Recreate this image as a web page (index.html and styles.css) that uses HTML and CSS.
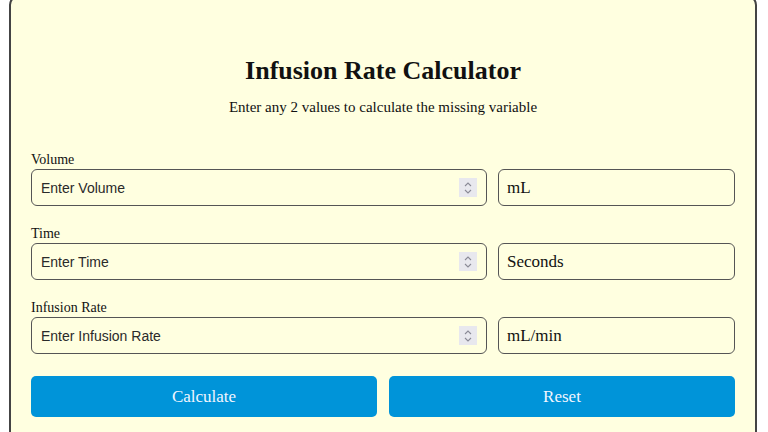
FILE: index.html
```html
<!DOCTYPE html>
<html lang="en">
<head>
<meta charset="utf-8">
<title>Infusion Rate Calculator</title>
<link rel="stylesheet" href="styles.css">
</head>
<body>
<div class="card">
  <h1 class="title">Infusion Rate Calculator</h1>
  <p class="subtitle">Enter any 2 values to calculate the missing variable</p>

  <div class="field">
    <label class="label">Volume</label>
    <div class="row">
      <div class="numbox">
        <input class="num" type="text" placeholder="Enter Volume">
        <span class="spin"><svg width="10" height="14" viewBox="0 0 10 14"><path d="M2 5 L5 2 L8 5 M2 9 L5 12 L8 9" fill="none" stroke="#8a8a96" stroke-width="1.1"/></svg></span>
      </div>
      <div class="unit">mL</div>
    </div>
  </div>

  <div class="field">
    <label class="label">Time</label>
    <div class="row">
      <div class="numbox">
        <input class="num" type="text" placeholder="Enter Time">
        <span class="spin"><svg width="10" height="14" viewBox="0 0 10 14"><path d="M2 5 L5 2 L8 5 M2 9 L5 12 L8 9" fill="none" stroke="#8a8a96" stroke-width="1.1"/></svg></span>
      </div>
      <div class="unit">Seconds</div>
    </div>
  </div>

  <div class="field">
    <label class="label">Infusion Rate</label>
    <div class="row">
      <div class="numbox">
        <input class="num" type="text" placeholder="Enter Infusion Rate">
        <span class="spin"><svg width="10" height="14" viewBox="0 0 10 14"><path d="M2 5 L5 2 L8 5 M2 9 L5 12 L8 9" fill="none" stroke="#8a8a96" stroke-width="1.1"/></svg></span>
      </div>
      <div class="unit">mL/min</div>
    </div>
  </div>

  <div class="buttons">
    <button class="btn">Calculate</button>
    <button class="btn">Reset</button>
  </div>
</div>
</body>
</html>
```

FILE: styles.css
```css
html, body {
  margin: 0;
  padding: 0;
  background: #ffffff;
  font-family: "Liberation Serif", "Times New Roman", serif;
  color: #111;
}

.card {
  width: 748px;
  box-sizing: border-box;
  margin: -5px 0 0 9px;
  padding: 59px 20px 30px 20px;
  background: #ffffe0;
  border: 2px solid #444;
  border-radius: 10px;
}

.title {
  margin: 0;
  font-size: 26px;
  line-height: 30px;
  font-weight: bold;
  text-align: center;
}

.subtitle {
  margin: 12px 0 36px 0;
  font-size: 15px;
  line-height: 18px;
  text-align: center;
}

.field {
  margin-bottom: 20px;
}

.label {
  display: block;
  font-size: 14px;
  line-height: 16px;
  margin-bottom: 1px;
}

.row {
  display: flex;
  gap: 11px;
}

.numbox {
  width: 456px;
  height: 37px;
  box-sizing: border-box;
  border: 1px solid #555;
  border-radius: 6px;
  display: flex;
  align-items: center;
  padding: 0 9px 0 9px;
}

.num {
  flex: 1;
  min-width: 0;
  border: none;
  outline: none;
  background: transparent;
  font-family: "Liberation Sans", Arial, sans-serif;
  font-size: 14px;
  padding: 0;
  color: #222;
}

.num::placeholder {
  color: #2a2a2a;
  opacity: 1;
}

.spin {
  width: 18px;
  height: 19px;
  background: #e8e8ee;
  display: flex;
  align-items: center;
  justify-content: center;
}

.unit {
  flex: 1;
  height: 37px;
  box-sizing: border-box;
  border: 1px solid #555;
  border-radius: 6px;
  display: flex;
  align-items: center;
  padding: 0 8px;
  font-size: 17px;
}

.buttons {
  display: flex;
  gap: 12px;
  margin-top: 22px;
}

.btn {
  flex: 1;
  height: 41px;
  border: none;
  border-radius: 5px;
  background: #0094d9;
  color: #f2f6ff;
  font-family: "Liberation Serif", "Times New Roman", serif;
  font-size: 17px;
}
```
